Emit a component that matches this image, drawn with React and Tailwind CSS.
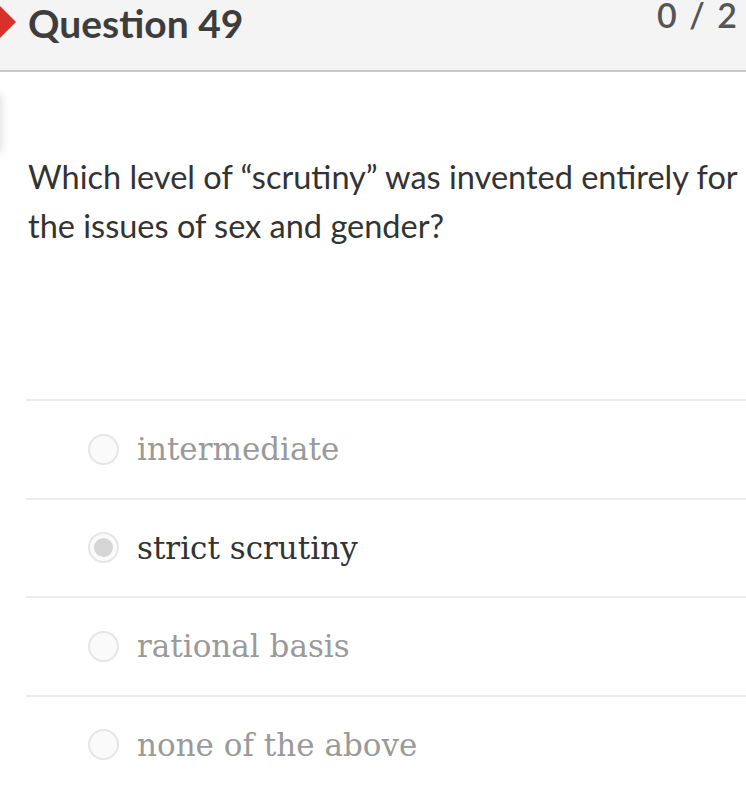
import React from "react";

const options = [
  { label: "intermediate", selected: false },
  { label: "strict scrutiny", selected: true },
  { label: "rational basis", selected: false },
  { label: "none of the above", selected: false },
];

export default function App() {
  return (
    <div className="relative w-[746px] h-[800px] overflow-hidden bg-white font-['Lato',sans-serif]">
      {/* header */}
      <div className="relative flex h-[72px] items-start justify-between border-b-2 border-[#c9c9c9] bg-[#f4f4f4]">
        <div className="absolute -left-[13px] top-[10px] h-[24px] w-[24px] rotate-45 bg-[#d8312c]" />
        <h1 className="ml-[28px] mt-[1px] text-[39px] font-bold leading-[44px] text-[#3d3d3d]">Question 49</h1>
        <div className="mt-[-7px] w-[89px] overflow-hidden whitespace-nowrap text-[34px] font-semibold leading-[44px] tracking-[2px] text-[#555]">
          0 / 2 pts
        </div>
      </div>

      {/* faint edge of neighbouring panel */}
      <div className="absolute -left-[20px] top-[94px] h-[58px] w-[20px] rounded-r shadow-[2px_0_8px_rgba(0,0,0,0.12)]" />

      {/* question */}
      <div className="pl-[28px] pt-[80px]">
        <p className="text-[32.5px] leading-[49px] text-[#333]">
          Which level of “scrutiny” was invented entirely for the issues of sex and gender?
        </p>
      </div>

      {/* answers */}
      <div className="ml-[26px] mt-[149px]">
        {options.map((o) => (
          <div key={o.label} className="flex h-[98.5px] items-center border-t-2 border-[#ececec]">
            <div className="ml-[62px] flex h-[31px] w-[31px] items-center justify-center rounded-full border-2 border-[#e6e6e6] bg-[#fafafa]">
              {o.selected && <div className="h-[19px] w-[19px] rounded-full bg-[#d5d5d5]" />}
            </div>
            <span
              className={
                "ml-[18px] font-['DejaVu_Serif',serif] text-[31px] " +
                (o.selected ? "text-[#333]" : "text-[#9a9a9a]")
              }
            >
              {o.label}
            </span>
          </div>
        ))}
      </div>
    </div>
  );
}
